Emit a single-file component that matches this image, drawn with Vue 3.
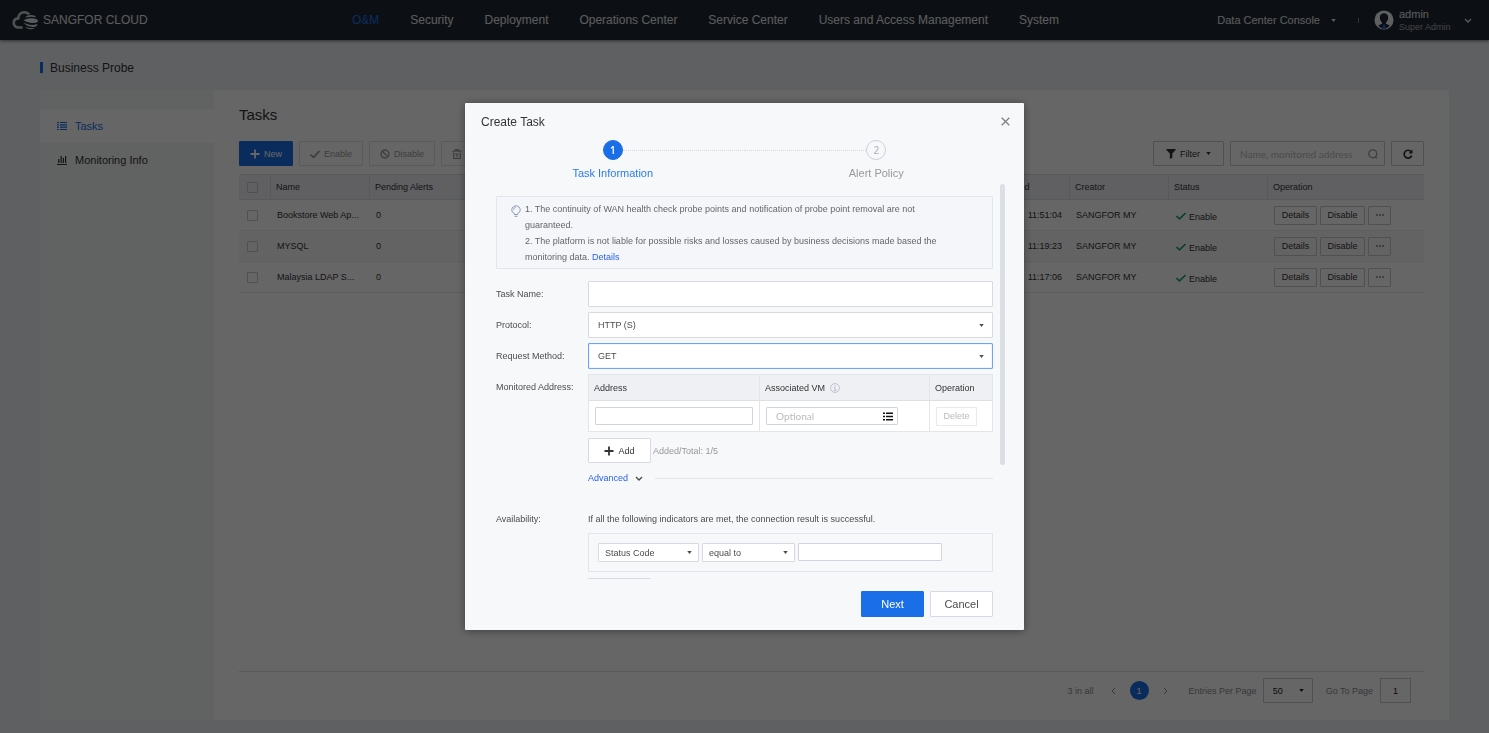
<script setup>
import { ref } from 'vue'

const navItems = ['O&M', 'Security', 'Deployment', 'Operations Center', 'Service Center', 'Users and Access Management', 'System']

const tasks = [
  { name: 'Bookstore Web Ap...', alerts: 0, time: '11:51:04', creator: 'SANGFOR MY' },
  { name: 'MYSQL', alerts: 0, time: '11:19:23', creator: 'SANGFOR MY' },
  { name: 'Malaysia LDAP S...', alerts: 0, time: '11:17:06', creator: 'SANGFOR MY' },
]

const taskName = ref('')
const protocol = ref('HTTP (S)')
const method = ref('GET')
const address = ref('')
const associatedVm = ref('')
const indicator = ref('Status Code')
const operator = ref('equal to')
const indicatorValue = ref('')
const keyword = ref('')
const pageSize = ref('50')
const pageNumber = ref('1')
</script>

<template>
  <div class="page">
    <header class="topbar">
      <div class="brand">
        <svg class="logo" viewBox="0 0 26 20" aria-hidden="true">
          <path d="M10.500 17.500H6.800C3.800 17.500 1.700 15.500 1.700 12.900c0-2.500 1.900-4.300 4.500-4.500C6.400 4.600 9 2.300 12.400 2.300c2.100 0 3.700.8 4.800 2.100" fill="none" stroke="#c9ccce" stroke-width="2.600" />
          <path d="M13 7.600c1.300-1.700 3.400-2.700 6-2.700 2.200 0 4.100.8 5.300 2.300-3.800-.8-7.500-.7-11.300.4z" fill="currentColor" />
          <path d="M11.700 10.200c4.200-2.300 9.300-2.600 13.600-.8.400.8.600 1.700.6 2.700-4.600 1.600-9.800 1-14.200-1.900z" fill="currentColor" />
          <path d="M11.400 12.300c4.200 2.900 9.500 3.500 14.200 1.700-.3 1-.8 1.800-1.500 2.500-4.500 1.200-10.200-.1-12.700-4.200z" fill="currentColor" />
          <path d="M13.200 16.700c2.900 1.400 6.300 1.900 9.900 1-1.200.9-2.600 1.500-4.300 1.500-2.300 0-4.300-.9-5.600-2.500z" fill="currentColor" />
        </svg>
        <span>SANGFOR CLOUD</span>
      </div>
      <nav class="mainnav">
        <a v-for="(item, i) in navItems" :key="item" href="#" :class="{ active: i === 0 }">{{ item }}</a>
      </nav>
      <div class="account">
        <button type="button" class="console">Data Center Console
          <svg class="caret" viewBox="0 0 6 4" aria-hidden="true"><path d="M0 0h6L3 4z" fill="currentColor" /></svg>
        </button>
        <span class="divider"></span>
        <button type="button" class="user">
          <svg class="avatar" viewBox="0 0 20 20" aria-hidden="true">
            <circle cx="10" cy="10" r="9.500" fill="#eef0f2" />
            <path d="M10 3.300c-2.600 0-4.200 1.700-4.200 4.200 0 2.300.9 3.900 2.200 4.900v1.300l-3.900 1.900A9 9 0 0 0 10 19a9 9 0 0 0 5.900-3.400L12 13.700v-1.300c1.300-1 2.200-2.600 2.200-4.900 0-2.500-1.600-4.200-4.200-4.200z" fill="#202a32" />
            <path d="M9 14.200h2l-.3 1.300.8 2.500L10 19.300 8.500 18l.8-2.500z" fill="#1a6ee8" />
          </svg>
          <span class="who"><span class="login">admin</span><span class="role">Super Admin</span></span>
          <svg class="chev" viewBox="0 0 8 5" aria-hidden="true"><path d="M1 1l3 3 3-3" fill="none" stroke="currentColor" stroke-width="1.300" /></svg>
        </button>
      </div>
    </header>

    <div class="crumb"><span class="mark"></span>Business Probe</div>

    <main class="panel">
      <nav class="side">
        <a href="#" class="active">
          <svg viewBox="0 0 10 10" aria-hidden="true"><path d="M0 1.500h2M3 1.500h7M0 3.800h2M3 3.800h7M0 6.200h2M3 6.200h7M0 8.500h2M3 8.500h7" stroke="currentColor" stroke-width="1.200" /></svg>
          Tasks
        </a>
        <a href="#">
          <svg viewBox="0 0 10 10" aria-hidden="true"><path d="M0 9.500h10" stroke="currentColor" /><path d="M1.800 4v4M4.200 1v7M6.400 3v5M8.600 1v7" stroke="currentColor" stroke-width="1.200" /></svg>
          Monitoring Info
        </a>
      </nav>

      <section class="content">
        <h1>Tasks</h1>
        <div class="toolbar">
          <button type="button" class="btn primary">
            <svg class="ico" viewBox="0 0 10 10" aria-hidden="true"><path d="M5 .5v9M.5 5h9" stroke="currentColor" stroke-width="1.800" /></svg>New
          </button>
          <button type="button" class="btn muted" disabled>
            <svg class="ico" viewBox="0 0 10 10" aria-hidden="true"><path d="M.5 5.500l3 2.800L9.500 2" fill="none" stroke="currentColor" stroke-width="1.700" /></svg>Enable
          </button>
          <button type="button" class="btn muted" disabled>
            <svg class="ico" viewBox="0 0 10 10" aria-hidden="true"><circle cx="5" cy="5" r="4" fill="none" stroke="currentColor" stroke-width="1.300" /><path d="M2.200 2.200l5.600 5.600" stroke="currentColor" stroke-width="1.300" /></svg>Disable
          </button>
          <button type="button" class="btn muted" disabled>
            <svg class="ico" viewBox="0 0 10 10" aria-hidden="true"><path d="M.5 2.200h9M3.500 2V.7h3V2M1.700 3.500v6h6.600v-6M3 5h4M5 5v3.500" fill="none" stroke="currentColor" stroke-width="1.200" /></svg>Delete
          </button>
          <button type="button" class="btn filter">
            <svg class="ico funnel" viewBox="0 0 10 11" aria-hidden="true"><path d="M0 0h10v1L6.500 5v4.500L3.700 11V5L0 1z" fill="currentColor" /></svg>Filter
            <svg class="caret" viewBox="0 0 6 4" aria-hidden="true"><path d="M0 0h6L3 4z" fill="currentColor" /></svg>
          </button>
          <div class="search">
            <input v-model="keyword" type="text" aria-label="Search" placeholder="Name, monitored address" />
            <svg viewBox="0 0 10 10" aria-hidden="true"><circle cx="4.800" cy="4.800" r="4" fill="none" stroke="currentColor" stroke-width="1.300" /><path d="M7 7.500l1.800 1.800" stroke="currentColor" stroke-width="1.500" /></svg>
          </div>
          <button type="button" class="btn refresh" aria-label="Refresh">
            <svg viewBox="0 0 10 10" aria-hidden="true"><path d="M8 2.600A3.900 3.900 0 1 0 8.700 6.600" fill="none" stroke="currentColor" stroke-width="1.700" /><path d="M9.500.5v4H5.500z" fill="currentColor" /></svg>
          </button>
        </div>

        <table class="grid">
          <colgroup>
            <col class="w-check" /><col class="w-col" /><col class="w-col" /><col /><col class="w-col" /><col class="w-col" /><col class="w-col" /><col class="w-op" />
          </colgroup>
          <thead>
            <tr>
              <th class="check"><input type="checkbox" aria-label="Select all" /></th>
              <th>Name</th>
              <th>Pending Alerts</th>
              <th class="plain"></th>
              <th>Last Modified</th>
              <th>Creator</th>
              <th>Status</th>
              <th>Operation</th>
            </tr>
          </thead>
          <tbody>
            <tr v-for="t in tasks" :key="t.name">
              <td class="check"><input type="checkbox" :aria-label="t.name" /></td>
              <td>{{ t.name }}</td>
              <td>{{ t.alerts }}</td>
              <td></td>
              <td class="time">{{ t.time }}</td>
              <td>{{ t.creator }}</td>
              <td class="status">
                <svg viewBox="0 0 10 8" aria-hidden="true"><path d="M.5 4l3 2.800L9.500 1" fill="none" stroke="currentColor" stroke-width="1.600" /></svg>Enable
              </td>
              <td>
                <div class="ops">
                  <button type="button">Details</button>
                  <button type="button">Disable</button>
                  <button type="button" aria-label="More"><svg viewBox="0 0 8 2" aria-hidden="true"><circle cx="1" cy="1" r=".8" fill="currentColor" /><circle cx="4" cy="1" r=".8" fill="currentColor" /><circle cx="7" cy="1" r=".8" fill="currentColor" /></svg></button>
                </div>
              </td>
            </tr>
          </tbody>
        </table>

        <footer class="pager">
          <span class="total">3 in all</span>
          <button type="button" class="arrow" aria-label="Previous page"><svg viewBox="0 0 5 8" aria-hidden="true"><path d="M4 1L1 4l3 3" fill="none" stroke="currentColor" /></svg></button>
          <button type="button" class="current">1</button>
          <button type="button" class="arrow" aria-label="Next page"><svg viewBox="0 0 5 8" aria-hidden="true"><path d="M1 1l3 3-3 3" fill="none" stroke="currentColor" /></svg></button>
          <label for="page-size" class="size-label">Entries Per Page</label>
          <span class="pick size">
            <select id="page-size" v-model="pageSize"><option>50</option></select>
            <svg class="caret" viewBox="0 0 6 4" aria-hidden="true"><path d="M0 0h6L3 4z" fill="currentColor" /></svg>
          </span>
          <label for="page-number" class="goto-label">Go To Page</label>
          <input id="page-number" v-model="pageNumber" type="text" class="goto" />
        </footer>
      </section>
    </main>

    <div class="mask">
      <section class="dialog" role="dialog" aria-modal="true" aria-labelledby="dialog-title">
        <header class="dialog-head">
          <h2 id="dialog-title">Create Task</h2>
          <button type="button" class="close" aria-label="Close"><svg viewBox="0 0 9 9" aria-hidden="true"><path d="M.7.7l7.600 7.600M8.300.7L.7 8.300" stroke="currentColor" stroke-width="1.300" /></svg></button>
        </header>

        <ol class="steps">
          <li class="on"><i></i><b>1</b><i class="line"></i><span>Task Information</span></li>
          <li><i class="line"></i><b>2</b><i></i><span>Alert Policy</span></li>
        </ol>

        <div class="body-wrap">
          <div class="body">
            <div class="notice">
              <svg viewBox="0 0 10 12" aria-hidden="true"><path d="M3.300 8.500C1.800 7.800.8 6.500.8 4.900.8 2.600 2.700.8 5 .8s4.200 1.800 4.200 4.100c0 1.600-1 2.900-2.500 3.600v1H3.300zM3.500 11.300h3M2.600 4.700c0-1.200.9-2.100 2.100-2.200" fill="none" stroke="currentColor" /></svg>
              <div>
                <p>1. The continuity of WAN health check probe points and notification of probe point removal are not guaranteed.</p>
                <p>2. The platform is not liable for possible risks and losses caused by business decisions made based the monitoring data. <a href="#">Details</a></p>
              </div>
            </div>

            <div class="row">
              <label for="task-name">Task Name:</label>
              <input id="task-name" v-model="taskName" type="text" class="field" />
            </div>
            <div class="row">
              <label for="protocol">Protocol:</label>
              <span class="pick">
                <select id="protocol" v-model="protocol"><option>HTTP (S)</option></select>
                <svg class="caret" viewBox="0 0 6 4" aria-hidden="true"><path d="M0 0h6L3 4z" fill="currentColor" /></svg>
              </span>
            </div>
            <div class="row">
              <label for="method">Request Method:</label>
              <span class="pick focused">
                <select id="method" v-model="method"><option>GET</option></select>
                <svg class="caret" viewBox="0 0 6 4" aria-hidden="true"><path d="M0 0h6L3 4z" fill="currentColor" /></svg>
              </span>
            </div>
            <div class="row">
              <label for="address">Monitored Address:</label>
              <div class="stack">
                <table class="addresses">
                  <colgroup><col /><col /><col class="w-del" /></colgroup>
                  <thead>
                    <tr>
                      <th>Address</th>
                      <th>Associated VM
                        <svg class="info" viewBox="0 0 10 10" aria-hidden="true"><circle cx="5" cy="5" r="4.400" fill="none" stroke="currentColor" stroke-width=".8" /><path d="M5 2.200v1.200M4 4.500h1.100v3M3.800 7.500h2.400" fill="none" stroke="currentColor" stroke-width=".9" /></svg>
                      </th>
                      <th>Operation</th>
                    </tr>
                  </thead>
                  <tbody>
                    <tr>
                      <td><input id="address" v-model="address" type="text" class="small" /></td>
                      <td>
                        <div class="vm">
                          <input v-model="associatedVm" type="text" class="small" placeholder="Optional" aria-label="Associated VM" />
                          <svg viewBox="0 0 10 9" aria-hidden="true"><path d="M0 1.200h2M3 1.200h7M0 4.500h2M3 4.500h7M0 7.800h2M3 7.800h7" stroke="currentColor" stroke-width="1.600" /></svg>
                        </div>
                      </td>
                      <td><button type="button" class="delete" disabled>Delete</button></td>
                    </tr>
                  </tbody>
                </table>
                <div class="add-line">
                  <button type="button" class="btn add">
                    <svg class="ico" viewBox="0 0 10 10" aria-hidden="true"><path d="M5 .5v9M.5 5h9" stroke="currentColor" stroke-width="1.800" /></svg>Add
                  </button>
                  <span>Added/Total: 1/5</span>
                </div>
                <div class="advanced">
                  <a href="#">Advanced</a>
                  <svg viewBox="0 0 8 5" aria-hidden="true"><path d="M1 1l3 3 3-3" fill="none" stroke="currentColor" stroke-width="1.400" /></svg>
                  <hr />
                </div>
              </div>
            </div>
            <div class="row availability">
              <label for="indicator">Availability:</label>
              <div class="stack">
                <p>If all the following indicators are met, the connection result is successful.</p>
                <div class="rules">
                  <span class="pick compact metric">
                    <select id="indicator" v-model="indicator"><option>Status Code</option></select>
                    <svg class="caret" viewBox="0 0 6 4" aria-hidden="true"><path d="M0 0h6L3 4z" fill="currentColor" /></svg>
                  </span>
                  <span class="pick compact compare">
                    <select v-model="operator" aria-label="Operator"><option>equal to</option></select>
                    <svg class="caret" viewBox="0 0 6 4" aria-hidden="true"><path d="M0 0h6L3 4z" fill="currentColor" /></svg>
                  </span>
                  <input v-model="indicatorValue" type="text" class="small value" aria-label="Value" />
                </div>
                <button type="button" class="btn add" aria-label="Add indicator"></button>
              </div>
            </div>
          </div>
          <div class="thumb"></div>
        </div>

        <footer class="dialog-foot">
          <button type="button" class="action next">Next</button>
          <button type="button" class="action">Cancel</button>
        </footer>
      </section>
    </div>
  </div>
</template>

<style>
body {
  margin: 0;
}
</style>

<style scoped>
.page,
.page * {
  box-sizing: border-box;
}
.page {
  display: flex;
  flex-direction: column;
  min-height: 100vh;
  background: #ebeff4;
  color: #333;
  font: 9px/16px "Liberation Sans", Arial, sans-serif;
}
button,
input,
select {
  margin: 0;
  font: inherit;
  color: inherit;
}
button {
  padding: 0;
  border: 0;
  background: none;
}
a {
  color: inherit;
  text-decoration: none;
}
svg {
  display: block;
  flex: none;
}
h1,
h2,
p,
ol {
  margin: 0;
  padding: 0;
  font-weight: normal;
}
th {
  font-weight: normal;
  text-align: left;
}
.caret {
  width: 5px;
  height: 3px;
}

/* top bar */
.topbar {
  display: grid;
  grid-template-columns: 352px 707px 1fr;
  align-items: center;
  height: 40px;
  background: #202a32;
  box-shadow: 0 1px 3px rgba(0, 0, 0, 0.5);
  color: #e4e6e8;
}
.brand {
  display: flex;
  align-items: center;
  gap: 5px;
  padding-left: 12px;
  font-size: 12px;
}
.logo {
  width: 26px;
  height: 20px;
}
.mainnav {
  display: flex;
  justify-content: space-between;
  font-size: 12px;
}
.mainnav .active {
  color: #1a6ee8;
}
.account {
  display: flex;
  align-items: center;
  justify-content: flex-end;
  padding-right: 17px;
}
.console {
  display: flex;
  align-items: center;
  gap: 11px;
  font-size: 11px;
}
.divider {
  width: 1px;
  height: 5px;
  margin: 0 15px 0 22px;
  background: #7a838a;
}
.user {
  display: flex;
  align-items: center;
  text-align: left;
}
.avatar {
  width: 20px;
  height: 20px;
  margin-right: 5px;
}
.who {
  display: flex;
  flex-direction: column;
  width: 65px;
}
.login {
  font-size: 11px;
  line-height: 13px;
}
.role {
  line-height: 12px;
  color: #a4a9ae;
}
.chev {
  width: 8px;
  height: 5px;
}

.crumb {
  display: flex;
  align-items: center;
  gap: 7px;
  height: 50px;
  padding: 5px 40px 0;
  font-size: 12px;
}
.mark {
  width: 3px;
  height: 11px;
  background: #1a6ee8;
}

/* main panel */
.panel {
  display: flex;
  flex: 1;
  margin: 0 40px 13px;
  background: #fff;
}
.side {
  width: 174px;
  padding-top: 19px;
  background: #f3f4f5;
}
.side a {
  display: flex;
  align-items: center;
  gap: 8px;
  height: 34px;
  padding-left: 17px;
  font-size: 11px;
}
.side a.active {
  background: #fff;
  color: #1a6ee8;
}
.side svg {
  width: 10px;
  height: 10px;
}
.content {
  display: flex;
  flex: 1;
  flex-direction: column;
  min-width: 0;
  padding: 15px 25px 0;
}
h1 {
  font-size: 15px;
  line-height: 20px;
}
.toolbar {
  display: flex;
  gap: 6px;
  margin-top: 16px;
}
.btn {
  display: flex;
  align-items: center;
  justify-content: center;
  gap: 4px;
  height: 25px;
  padding: 0 10px;
  border: 1px solid #c4c8ce;
  border-radius: 1px;
  background: #fff;
}
.btn.primary {
  border-color: #1a6ee8;
  background: #1a6ee8;
  color: #fff;
}
.btn.muted {
  border-color: #dfe1e5;
  color: #9b9b9b;
}
.ico {
  width: 10px;
  height: 10px;
}
.btn.filter {
  width: 71px;
  margin-left: auto;
}
.filter .caret {
  margin-left: 2px;
}
.search {
  display: flex;
  align-items: center;
  width: 155px;
  padding: 0 6px 0 9px;
  border: 1px solid #c4c8ce;
  border-radius: 1px;
  color: #9b9b9b;
}
.search input {
  flex: 1;
  min-width: 0;
  padding: 0;
  border: 0;
  outline: 0;
  background: none;
  font-family: Lato, sans-serif;
  font-size: 10px;
}
.search svg {
  width: 10px;
  height: 10px;
}
::placeholder {
  color: #bbb;
  opacity: 1;
}
.refresh {
  width: 33px;
}
.refresh svg {
  width: 10px;
  height: 10px;
}

.grid {
  width: 100%;
  margin-top: 8px;
  border-collapse: separate;
  border-spacing: 0;
  table-layout: fixed;
}
.w-check {
  width: 31px;
}
.w-col {
  width: 99px;
}
.w-op {
  width: 157px;
}
.grid th {
  height: 26px;
  padding: 0 5px;
  border-top: 1px solid #dcdfe4;
  border-bottom: 1px solid #dcdfe4;
  border-left: 1px solid #dcdfe4;
  background: #eff1f5;
}
.grid th:first-child,
.grid th.plain {
  border-left-color: transparent;
}
.grid td {
  height: 31px;
  padding: 0 7px;
  border-bottom: 1px solid #e8eaed;
  white-space: nowrap;
}
.grid tbody tr:nth-child(even) {
  background: #f8f8f9;
}
.grid .check {
  padding: 0 0 0 8px;
}
.grid th.check {
  padding-left: 7px;
}
.grid .check input {
  display: block;
  width: 11px;
  height: 11px;
  appearance: none;
  border: 1px solid #c4c8ce;
  border-radius: 1px;
}
.grid .time {
  text-align: right;
}
.grid .status {
  padding: 3px 0 0 8px;
}
.status svg {
  display: inline-block;
  width: 10px;
  height: 8px;
  margin-right: 3px;
  color: #18a576;
}
.ops {
  display: flex;
  gap: 3px;
}
.ops button {
  display: flex;
  align-items: center;
  justify-content: center;
  width: 45px;
  height: 19px;
  border: 1px solid #c4c8ce;
  border-radius: 1px;
}
.ops button:first-child {
  width: 43px;
}
.ops button:last-child {
  width: 23px;
}
.ops svg {
  width: 8px;
  height: 2px;
}

.pager {
  display: flex;
  align-items: center;
  margin-top: auto;
  padding: 6px 13px 17px;
  border-top: 1px solid #dcdfe4;
  color: #8c8c8c;
}
.total {
  margin-left: auto;
}
.arrow {
  margin: 0 17px;
}
.arrow + .current {
  margin-left: -3px;
}
.current + .arrow {
  margin-left: 14px;
}
.arrow svg {
  width: 5px;
  height: 8px;
}
.current {
  width: 19px;
  height: 19px;
  border-radius: 50%;
  background: #1a6ee8;
  color: #fff;
}
.size-label {
  margin-left: 4px;
}
.goto-label {
  margin-left: 13px;
}
.goto {
  width: 31px;
  height: 25px;
  margin-left: 7px;
  padding: 0;
  border: 1px solid #c4c8ce;
  background: #fff;
  color: #222;
  text-align: center;
}

/* drop-downs */
.pick {
  display: flex;
  flex: 1;
  align-items: center;
  height: 26px;
  border: 1px solid #d6dae2;
  border-radius: 1px;
  background: #fff;
}
.pick select {
  flex: 1;
  min-width: 0;
  height: 100%;
  margin-right: -13px;
  padding: 0 13px 0 9px;
  appearance: none;
  border: 0;
  outline: 0;
  background: none;
}
.pick .caret {
  margin-right: 8px;
  pointer-events: none;
}
.pick.focused {
  border-color: #6ea5f2;
  box-shadow: inset 0 0 1px #6ea5f2;
}
.pick.size {
  flex: none;
  width: 50px;
  height: 25px;
  margin-left: 6px;
  border-color: #c4c8ce;
  color: #222;
}

/* dialog */
.mask {
  position: fixed;
  inset: 0;
  display: flex;
  align-items: center;
  justify-content: center;
  background: rgba(0, 0, 0, 0.6);
}
.dialog {
  width: 559px;
  max-width: 100%;
  border-radius: 1px;
  background: #f7f8fa;
  box-shadow: 0 1px 8px rgba(0, 0, 0, 0.4);
  color: #4c4c4c;
}
.dialog-head {
  display: flex;
  align-items: center;
  justify-content: space-between;
  height: 37px;
  padding: 0 14px 0 16px;
}
h2 {
  font-size: 12px;
  color: #333;
}
.close {
  color: #808080;
}
.close svg {
  width: 9px;
  height: 9px;
}
.steps {
  display: flex;
  height: 43px;
  padding: 0 16px;
  list-style: none;
}
.steps li {
  display: grid;
  flex: 1;
  grid-template-columns: 1fr 20px 1fr;
  align-content: start;
  align-items: center;
  row-gap: 5px;
  color: #999;
}
.steps b {
  height: 20px;
  border: 1px solid #cdd0dc;
  border-radius: 50%;
  font: 600 10px/18px "Open Sans", sans-serif;
  text-align: center;
  color: #b9bcc6;
}
.steps span {
  grid-column: 1 / -1;
  font-size: 11px;
  text-align: center;
}
.steps .line {
  border-top: 1px dotted #d3d7df;
}
.steps .on {
  color: #2b7bea;
}
.steps .on b {
  border-color: #1a6ee8;
  background: #1a6ee8;
  color: #fff;
}
.body-wrap {
  position: relative;
}
.body {
  height: 396px;
  overflow-y: auto;
  padding: 13px 31px 0;
  scrollbar-width: none;
}
.thumb {
  position: absolute;
  top: 1px;
  right: 19px;
  width: 5px;
  height: 281px;
  border-radius: 3px;
  background: #dcdfe6;
}
.notice {
  display: flex;
  gap: 4px;
  margin-bottom: 12px;
  padding: 4px 33px 3px 14px;
  border: 1px solid #e2e5eb;
  border-radius: 1px;
  background: #f4f6fa;
  color: #666;
}
.notice svg {
  width: 10px;
  height: 12px;
  margin-top: 4px;
  color: #8f9bb3;
}
.notice a,
.advanced a {
  color: #2a62e8;
}
.row {
  display: flex;
  margin-bottom: 5px;
}
.row > label {
  width: 92px;
  line-height: 26px;
}
.field {
  flex: 1;
  height: 26px;
  padding: 0 9px;
  border: 1px solid #d6dae2;
  border-radius: 1px;
  background: #fff;
}
.stack {
  flex: 1;
  min-width: 0;
}
.addresses {
  width: 100%;
  border: 1px solid #e2e5eb;
  border-collapse: separate;
  border-spacing: 0;
  table-layout: fixed;
}
.w-del {
  width: 63px;
}
.addresses th {
  height: 26px;
  padding: 0 5px;
  border-bottom: 1px solid #dcdfe6;
  background: #eff0f4;
  color: #333;
}
.addresses td {
  height: 30px;
  padding: 0 6px;
  background: #fff;
}
.addresses th + th,
.addresses td + td {
  border-left: 1px solid #e2e5eb;
}
.info {
  display: inline-block;
  width: 10px;
  height: 10px;
  margin-left: 2px;
  vertical-align: -2px;
  color: #b5bac6;
}
.small {
  display: block;
  width: 100%;
  height: 18px;
  padding: 0 9px;
  border: 1px solid #d0d5df;
  border-radius: 1px;
  background: #fff;
}
.vm {
  display: flex;
  align-items: center;
  width: 132px;
}
.vm .small {
  margin-right: -15px;
  font-family: Lato, sans-serif;
  font-size: 10px;
}
.vm svg {
  width: 10px;
  height: 9px;
  color: #111;
}
.delete {
  display: block;
  width: 41px;
  height: 19px;
  border: 1px solid #e8eaef;
  color: #bbb;
}
.add-line {
  display: flex;
  align-items: center;
  gap: 2px;
  margin-top: 6px;
  color: #999;
}
.btn.add {
  width: 63px;
  border-color: #d6dae2;
  color: #333;
}
.advanced {
  display: flex;
  align-items: center;
  height: 18px;
  margin-top: 6px;
}
.advanced svg {
  width: 8px;
  height: 5px;
  margin: 0 12px 0 7px;
}
.advanced hr {
  flex: 1;
  margin: 0;
  border: 0;
  border-top: 1px solid #e2e5eb;
}
.availability {
  margin-top: 23px;
}
.availability > label,
.availability p {
  line-height: 18px;
}
.rules {
  display: flex;
  gap: 3px;
  margin: 5px 0 6px;
  padding: 9px;
  border: 1px solid #e2e5eb;
}
.pick.compact {
  flex: none;
  height: 19px;
}
.pick.compact select {
  padding-left: 6px;
}
.pick.compact .caret {
  margin-right: 6px;
}
.pick.metric {
  width: 101px;
}
.pick.compare {
  width: 93px;
}
.value {
  width: 144px;
}
.dialog-foot {
  display: flex;
  justify-content: flex-end;
  gap: 6px;
  padding: 12px 31px 13px;
}
.action {
  width: 63px;
  height: 26px;
  border: 1px solid #d6dae2;
  border-radius: 1px;
  background: #fff;
  font-size: 11px;
}
.action.next {
  border-color: #1a6ee8;
  background: #1a6ee8;
  color: #fff;
}
</style>
